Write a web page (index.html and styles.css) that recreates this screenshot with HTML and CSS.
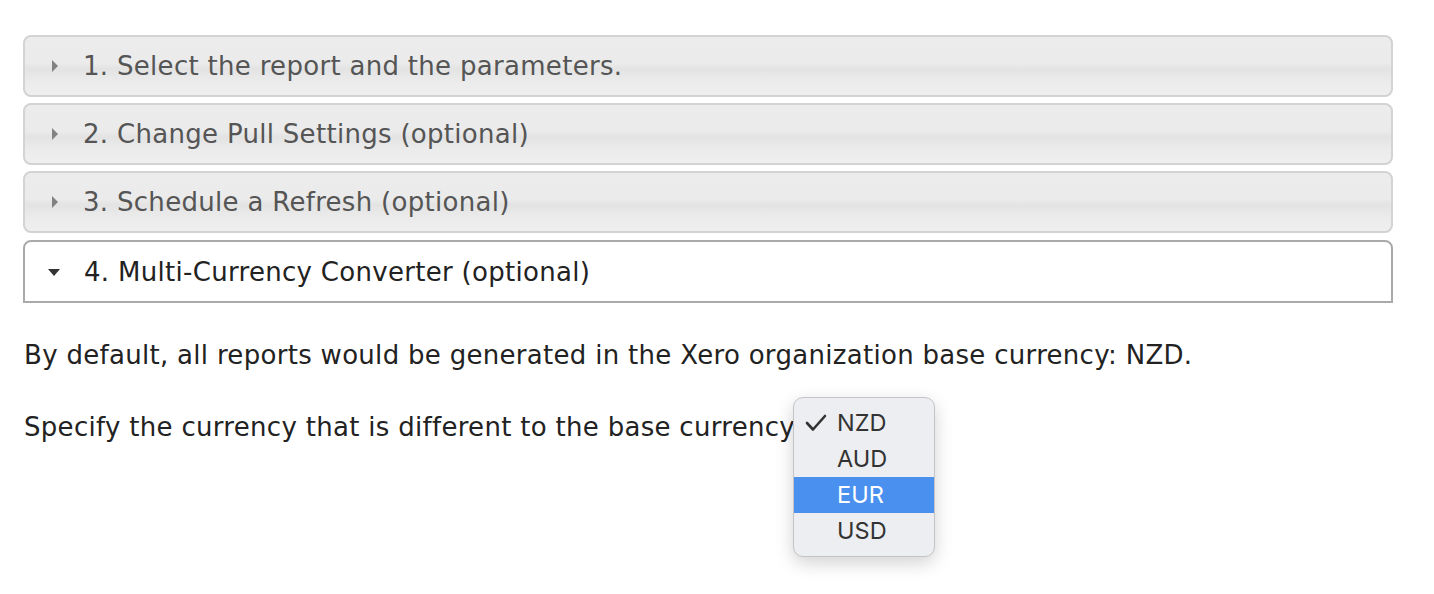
FILE: index.html
```html
<!DOCTYPE html>
<html lang="en">
<head>
  <meta charset="UTF-8">
  <meta name="viewport" content="width=device-width, initial-scale=1.0">
  <title>Multi-Currency Converter</title>
  <link rel="stylesheet" href="styles.css">
</head>
<body>

  <div class="wizard">
    <div class="step">
      <span class="arrow arrow-right"></span>
      <span>1. Select the report and the parameters.</span>
    </div>
    <div class="step">
      <span class="arrow arrow-right"></span>
      <span>2. Change Pull Settings (optional)</span>
    </div>
    <div class="step">
      <span class="arrow arrow-right"></span>
      <span>3. Schedule a Refresh (optional)</span>
    </div>
    <div class="step step-active">
      <span class="arrow arrow-down"></span>
      <span>4. Multi-Currency Converter (optional)</span>
    </div>
  </div>

  <div class="content">
    <p>By default, all reports would be generated in the Xero organization base currency: NZD.</p>
    <p>Specify the currency that is different to the base currency<span class="picker">
        <span class="menu">
          <span class="item">
            <svg class="tick" width="22" height="18" viewBox="0 0 22 18"><polyline points="2,9 8,15.5 20,2" fill="none" stroke="#333" stroke-width="2.6" stroke-linecap="round" stroke-linejoin="round"/></svg>NZD</span>
          <span class="item">AUD</span>
          <span class="item item-hover">EUR</span>
          <span class="item">USD</span>
        </span>
      </span></p>
  </div>

</body>
</html>
```

FILE: styles.css
```css
body {
  margin: 0;
  font-family: "DejaVu Sans", Verdana, sans-serif;
  background-color: #ffffff;
}

.wizard {
  width: 1370px;
  margin: 35px 0 0 23px;
  display: flex;
  flex-direction: column;
  gap: 6px;
}

.step {
  display: flex;
  align-items: center;
  height: 58px;
  padding-left: 27px;
  border: 2px solid #d3d3d3;
  border-radius: 8px;
  font-size: 26px;
  letter-spacing: 0.3px;
  color: #555555;
  background: linear-gradient(to bottom, #ececec 0%, #ebebeb 45%, #e3e3e3 55%, #ebebeb 75%, #efefef 100%);
}

.step-active {
  height: 59px;
  margin-top: 1px;
  border-color: #aaaaaa;
  border-radius: 8px 8px 0 0;
  background: #ffffff;
  color: #222222;
}

.arrow {
  width: 0;
  height: 0;
}

.arrow-right {
  margin-right: 25px;
  border-top: 6px solid transparent;
  border-bottom: 6px solid transparent;
  border-left: 6px solid #828282;
}

.arrow-down {
  margin-left: -4px;
  margin-right: 24px;
  margin-top: 2px;
  border-left: 6px solid transparent;
  border-right: 6px solid transparent;
  border-top: 7px solid #333333;
}

.content {
  padding: 0 0 160px 24px;
  font-size: 26px;
  letter-spacing: 0.3px;
  color: #222222;
}

.content p {
  margin: 34px 0 0 0;
  line-height: 36px;
}

.content p + p {
  margin-top: 36px;
}

.picker {
  position: relative;
  display: inline-block;
  width: 3px;
  height: 20px;
}

.menu {
  position: absolute;
  left: -2px;
  top: -19px;
  width: 140px;
  padding: 7px 0;
  background: #eceef1;
  border: 1px solid #c4c4c6;
  border-radius: 10px;
  box-shadow: 0 6px 18px rgba(0, 0, 0, 0.18);
  font-family: Inter, "Noto Sans", sans-serif;
  font-size: 23.5px;
  letter-spacing: 0;
  color: #333333;
}

.item {
  position: relative;
  display: block;
  height: 36px;
  line-height: 36px;
  padding-left: 43px;
}

.item-hover {
  background-color: #4a90ee;
  color: #ffffff;
}

.tick {
  position: absolute;
  left: 11px;
  top: 9px;
}
```
